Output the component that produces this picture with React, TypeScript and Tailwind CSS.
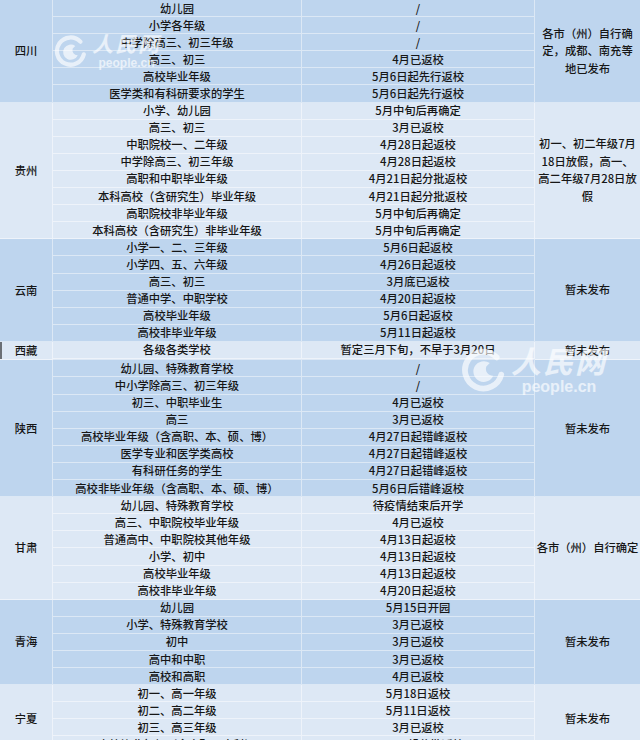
type Row = [string, string];

interface Group {
  name: string;
  tone: "blue" | "light";
  rows: Row[];
  note: string[];
  edge?: boolean;
}

const groups: Group[] = [
  {
    name: "四川",
    tone: "blue",
    rows: [
      ["幼儿园", "/"],
      ["小学各年级", "/"],
      ["中学除高三、初三年级", "/"],
      ["高三、初三", "4月已返校"],
      ["高校毕业年级", "5月6日起先行返校"],
      ["医学类和有科研要求的学生", "5月6日起先行返校"],
    ],
    note: ["各市（州）自行确", "定，成都、南充等", "地已发布"],
  },
  {
    name: "贵州",
    tone: "light",
    rows: [
      ["小学、幼儿园", "5月中旬后再确定"],
      ["高三、初三", "3月已返校"],
      ["中职院校一、二年级", "4月28日起返校"],
      ["中学除高三、初三年级", "4月28日起返校"],
      ["高职和中职毕业年级", "4月21日起分批返校"],
      ["本科高校（含研究生）毕业年级", "4月21日起分批返校"],
      ["高职院校非毕业年级", "5月中旬后再确定"],
      ["本科高校（含研究生）非毕业年级", "5月中旬后再确定"],
    ],
    note: ["初一、初二年级7月", "18日放假，高一、", "高二年级7月28日放", "假"],
  },
  {
    name: "云南",
    tone: "blue",
    rows: [
      ["小学一、二、三年级", "5月6日起返校"],
      ["小学四、五、六年级", "4月26日起返校"],
      ["高三、初三", "3月底已返校"],
      ["普通中学、中职学校", "4月20日起返校"],
      ["高校毕业年级", "5月6日起返校"],
      ["高校非毕业年级", "5月11日起返校"],
    ],
    note: ["暂未发布"],
  },
  {
    name: "西藏",
    tone: "light",
    edge: true,
    rows: [["各级各类学校", "暂定三月下旬，不早于3月20日"]],
    note: ["暂未发布"],
  },
  {
    name: "陕西",
    tone: "blue",
    rows: [
      ["幼儿园、特殊教育学校", "/"],
      ["中小学除高三、初三年级", "/"],
      ["初三、中职毕业生", "4月已返校"],
      ["高三", "3月已返校"],
      ["高校毕业年级（含高职、本、硕、博）", "4月27日起错峰返校"],
      ["医学专业和医学类高校", "4月27日起错峰返校"],
      ["有科研任务的学生", "4月27日起错峰返校"],
      ["高校非毕业年级（含高职、本、硕、博）", "5月6日后错峰返校"],
    ],
    note: ["暂未发布"],
  },
  {
    name: "甘肃",
    tone: "light",
    rows: [
      ["幼儿园、特殊教育学校", "待疫情结束后开学"],
      ["高三、中职院校毕业年级", "4月已返校"],
      ["普通高中、中职院校其他年级", "4月13日起返校"],
      ["小学、初中", "4月13日起返校"],
      ["高校毕业年级", "4月13日起返校"],
      ["高校非毕业年级", "4月20日起返校"],
    ],
    note: ["各市（州）自行确定"],
  },
  {
    name: "青海",
    tone: "blue",
    rows: [
      ["幼儿园", "5月15日开园"],
      ["小学、特殊教育学校", "3月已返校"],
      ["初中", "3月已返校"],
      ["高中和中职", "3月已返校"],
      ["高校和高职", "4月已返校"],
    ],
    note: ["暂未发布"],
  },
  {
    name: "宁夏",
    tone: "light",
    rows: [
      ["初一、高一年级", "5月18日返校"],
      ["初二、高二年级", "5月11日返校"],
      ["初三、高三年级", "3月已返校"],
      ["高校毕业年级（含高职、本科）", "5月6日起分批返校"],
    ],
    note: ["暂未发布"],
  },
];

function Watermark({ scale }: { scale: "sm" | "lg" }) {
  const lg = scale === "lg";
  return (
    <div className="flex items-center gap-[4px] text-white/65">
      <svg
        viewBox="0 0 40 40"
        className={lg ? "h-[46px] w-[46px]" : "h-[34px] w-[34px]"}
        fill="none"
      >
        <path
          d="M31 9 A16 16 0 1 0 35 24"
          stroke="currentColor"
          strokeWidth="5"
          strokeLinecap="round"
        />
        <path
          d="M25 14 A9 9 0 1 0 28 25 A6 6 0 0 1 22 17 Z"
          fill="currentColor"
        />
      </svg>
      <div className="flex flex-col items-center">
        <span
          className={`italic font-bold leading-none tracking-[2px] font-['Noto_Sans_CJK_SC',serif] ${
            lg ? "text-[30px]" : "text-[21px]"
          }`}
        >
          人民网
        </span>
        <span
          className={`font-bold leading-none font-['Liberation_Sans',sans-serif] ${
            lg ? "mt-[4px] text-[16px]" : "mt-[3px] text-[12px]"
          }`}
        >
          people.cn
        </span>
      </div>
    </div>
  );
}

function GroupBlock({ g }: { g: Group }) {
  const blue = g.tone === "blue";
  const bg = blue ? "bg-[#bed5ee]" : "bg-[#dde8f5]";
  const line = blue ? "border-[#dce8f5]" : "border-[#eef3fa]";

  return (
    <div className={`flex ${bg}`}>
      <div
        className={`flex w-[53px] shrink-0 items-center justify-center border-r border-b ${line} ${
          g.edge ? "shadow-[inset_2px_0_0_#6b6f75]" : ""
        }`}
      >
        {g.name}
      </div>
      <div className="flex w-[482px] shrink-0 flex-col">
        {g.rows.map(([who, when], i) => (
          <div key={i} className={`flex h-[17.1px] border-b ${line}`}>
            <div className={`flex w-[249px] items-center justify-center whitespace-nowrap border-r ${line}`}>
              {who}
            </div>
            <div className={`flex flex-1 items-center justify-center whitespace-nowrap border-r ${line}`}>
              {when}
            </div>
          </div>
        ))}
      </div>
      <div className={`flex flex-1 flex-col items-center justify-center border-b ${line} leading-[17.5px]`}>
        {g.note.map((l, i) => (
          <span key={i} className="whitespace-nowrap">
            {l}
          </span>
        ))}
      </div>
    </div>
  );
}

export default function App() {
  return (
    <div className="relative h-[740px] w-[640px] overflow-hidden bg-[#dde8f5] font-['Noto_Sans_CJK_SC',sans-serif] text-[11.3px] font-medium leading-[17px] text-[#161616]">
      {groups.map((g) => (
        <GroupBlock key={g.name} g={g} />
      ))}

      {/* watermarks */}
      <div className="pointer-events-none absolute left-[54px] top-[33px]">
        <Watermark scale="sm" />
      </div>
      <div className="pointer-events-none absolute left-[461px] top-[345px]">
        <Watermark scale="lg" />
      </div>
    </div>
  );
}
